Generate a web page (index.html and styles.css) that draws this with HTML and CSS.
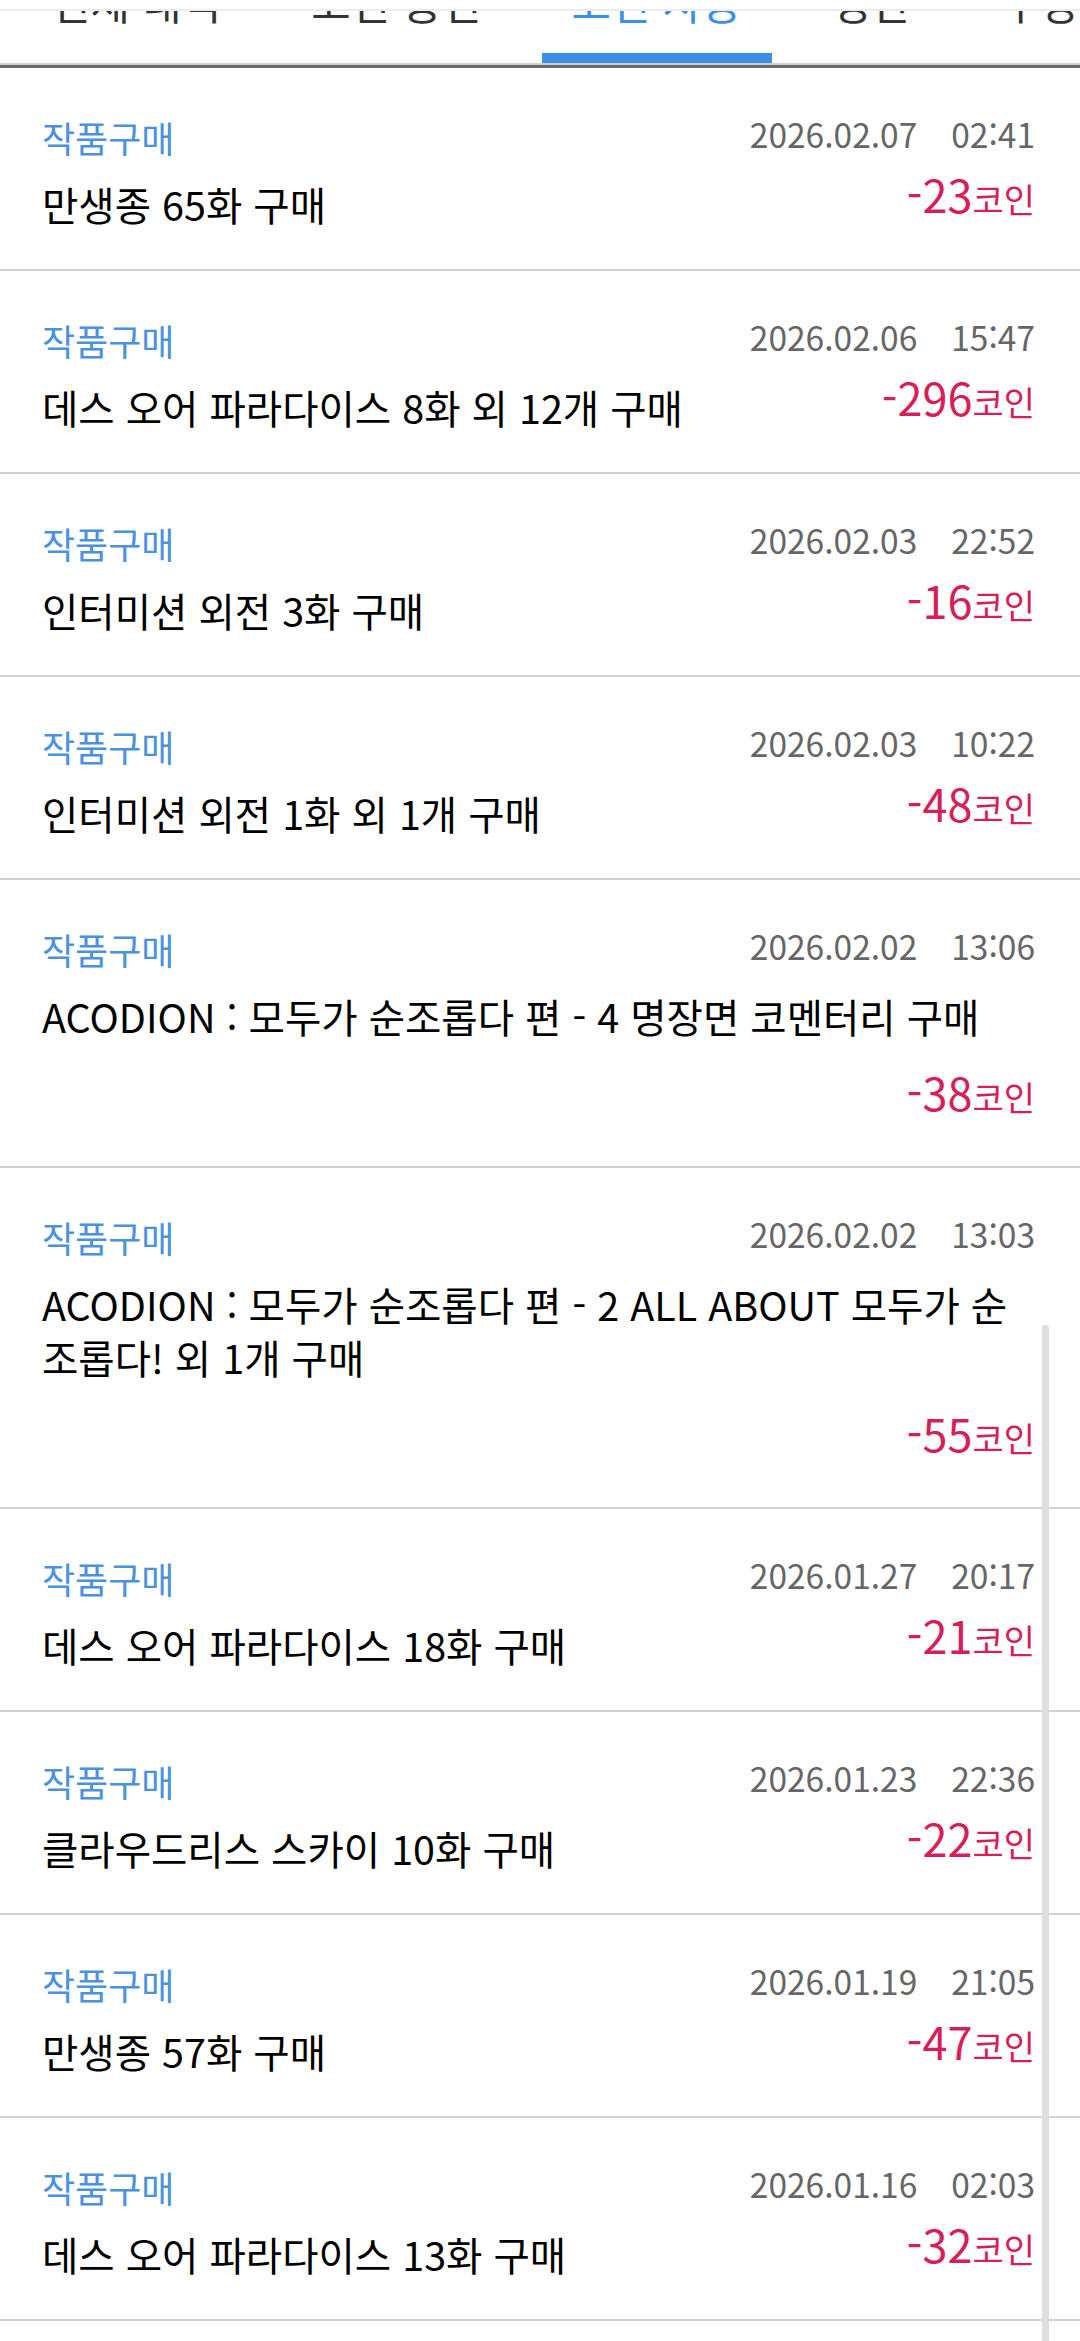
FILE: index.html
```html
<!DOCTYPE html>
<html lang="ko">

<head>
  <meta charset="UTF-8">
  <meta name="viewport" content="width=device-width, initial-scale=1.0">
  <title>코인 사용 내역</title>
  <link rel="stylesheet" href="styles.css">
</head>

<body>

  <div class="appbar"></div>

  <nav class="tabs">
    <div class="tab"><span class="tab-label">전체 내역</span><span class="tab-bar"></span></div>
    <div class="tab"><span class="tab-label">코인 충전</span><span class="tab-bar"></span></div>
    <div class="tab active"><span class="tab-label">코인 사용</span><span class="tab-bar"></span></div>
    <div class="tab"><span class="tab-label">정산</span><span class="tab-bar"></span></div>
    <div class="tab"><span class="tab-label">무상</span><span class="tab-bar"></span></div>
  </nav>
  <div class="tabs-line"></div>

  <ul class="history" id="history"></ul>

  <div class="scrollbar"></div>

  <script>
    const records = [
      ['2026.02.07', '02:41', '만생종 65화 구매', 23],
      ['2026.02.06', '15:47', '데스 오어 파라다이스 8화 외 12개 구매', 296],
      ['2026.02.03', '22:52', '인터미션 외전 3화 구매', 16],
      ['2026.02.03', '10:22', '인터미션 외전 1화 외 1개 구매', 48],
      ['2026.02.02', '13:06', 'ACODION : 모두가 순조롭다 편 - 4 명장면 코멘터리 구매', 38],
      ['2026.02.02', '13:03', 'ACODION : 모두가 순조롭다 편 - 2 ALL ABOUT 모두가 순조롭다! 외 1개 구매', 55],
      ['2026.01.27', '20:17', '데스 오어 파라다이스 18화 구매', 21],
      ['2026.01.23', '22:36', '클라우드리스 스카이 10화 구매', 22],
      ['2026.01.19', '21:05', '만생종 57화 구매', 47],
      ['2026.01.16', '02:03', '데스 오어 파라다이스 13화 구매', 32],
      ['2026.01.15', '23:11', '만생종 56화 구매', 25],
    ]

    const history = document.getElementById('history')

    records.forEach(([date, time, title, coins]) => {
      const item = document.createElement('li')
      item.className = 'record'
      item.innerHTML = `
        <div class="record-head">
          <span class="record-type">작품구매</span>
          <span class="record-date">${date}<span class="record-time">${time}</span></span>
        </div>
        <div class="record-body">
          <span class="record-title">${title}</span>
          <span class="record-amount">-${coins}<small>코인</small></span>
        </div>`
      history.appendChild(item)
    })
  </script>

</body>

</html>
```

FILE: styles.css
```css
body {
  margin: 0;
  height: 2341px;
  overflow: hidden;
  background: #fff;
  font-family: 'Noto Sans CJK KR', 'Noto Sans', sans-serif;
  color: #111;
}

.appbar {
  height: 9px;
  border-bottom: 2px solid #ececec;
  background: #fff;
  position: relative;
  z-index: 2;
}

.tabs {
  display: flex;
  gap: 30px;
  height: 52px;
  padding-left: 21px;
  overflow: hidden;
}

.tab {
  flex-shrink: 0;
  display: flex;
  flex-direction: column;
  justify-content: space-between;
  color: #333;
}

.tab-label {
  font-size: 43px;
  line-height: 40px;
  margin-top: -30px;
  padding: 0 30px;
  white-space: nowrap;
}

.tab-bar {
  height: 10px;
}

.tab.active {
  color: #3d8ee8;
}

.tab.active .tab-bar {
  background: #3d8ee8;
}

.tabs-line {
  height: 5px;
  background: linear-gradient(#cfcfcf 0 2px, #6a6a6a 2px 5px);
}

.history {
  list-style: none;
  margin: 0;
  padding: 0;
}

.record {
  padding: 45px 45px 39px 42px;
  border-bottom: 2px solid #d2d2d2;
}

.record-head {
  display: flex;
  justify-content: space-between;
  align-items: center;
  height: 48px;
  line-height: 48px;
}

.record-type {
  font-size: 36px;
  color: #4a92e0;
}

.record-date {
  font-size: 33.5px;
  color: #666;
  margin-top: -6px;
}

.record-time {
  margin-left: 34px;
}

.record-body {
  display: flex;
  flex-wrap: wrap;
  justify-content: space-between;
  align-items: flex-start;
  row-gap: 33px;
  margin-top: 16px;
}

.record-title {
  font-size: 39.5px;
  line-height: 53px;
  color: #000;
}

.record-amount {
  margin-left: auto;
  font-size: 45px;
  line-height: 34px;
  padding-bottom: 18px;
  color: #d61f58;
  white-space: nowrap;
}

.record-amount small {
  font-size: 34px;
  line-height: 0;
}

.scrollbar {
  position: absolute;
  left: 1042px;
  top: 1325px;
  width: 7px;
  height: 1100px;
  border-radius: 4px;
  background: #dedede;
}
```
